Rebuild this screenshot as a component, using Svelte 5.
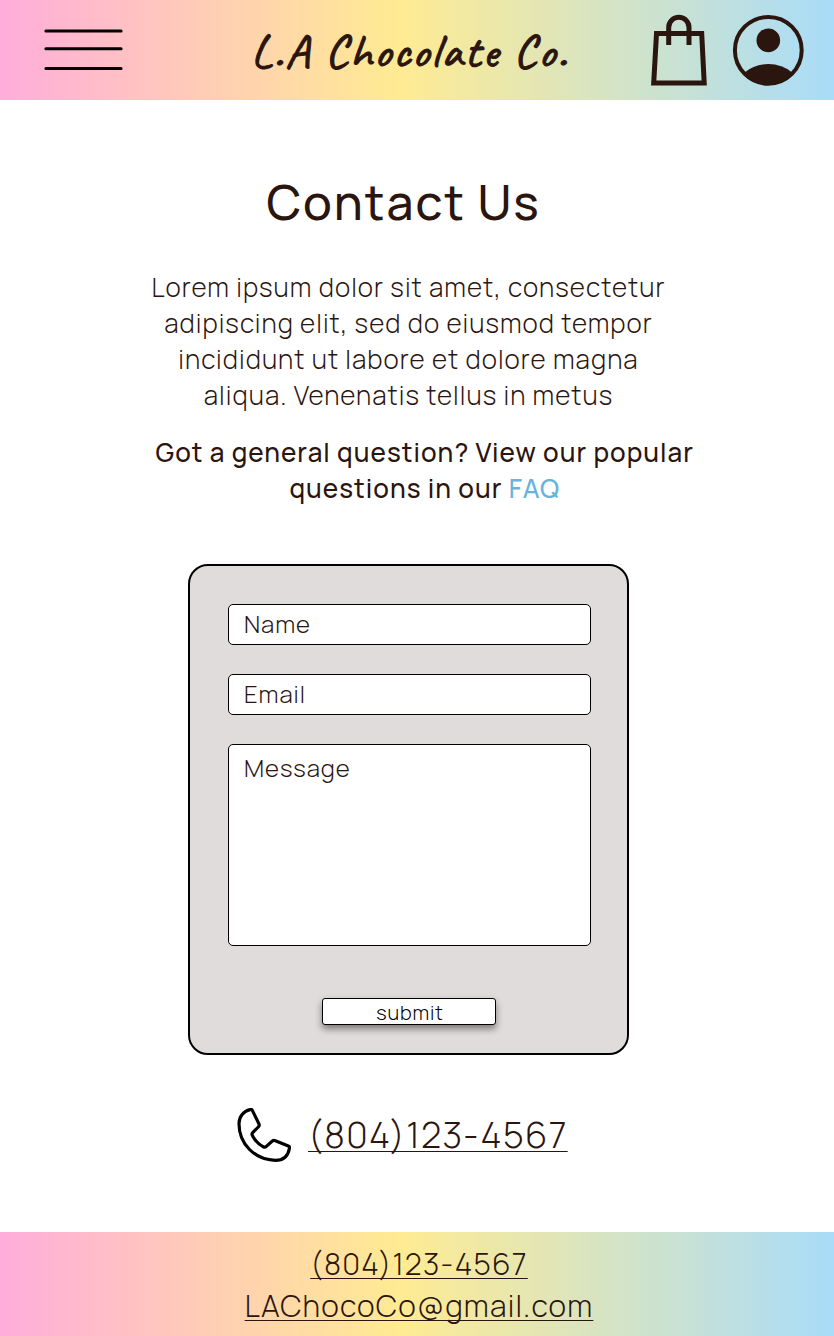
<script>
  let name = $state('');
  let email = $state('');
  let message = $state('');
</script>

<div class="page">
  <header>
    <button class="menu" aria-label="Menu">
      <svg width="80" height="42" viewBox="0 0 80 42" stroke="#000" stroke-width="3" stroke-linecap="round">
        <path d="M2.9 3H78.1M2.9 20.7H78.1M2.9 40.4H78.1" />
      </svg>
    </button>
    <div class="logo">L.A Chocolate Co.</div>
    <div class="actions">
      <svg width="58" height="74" viewBox="650 13 58 74" fill="none" stroke="#2a150f" stroke-width="5">
        <path d="M656.5 33.6H701.7L704.2 83.1H653.7Z" />
        <path d="M668.7 45V27.4A10.15 10.15 0 0 1 689 27.4V45" />
      </svg>
      <svg width="72" height="74" viewBox="732 13 72 74">
        <circle cx="768.3" cy="50.3" r="33.4" fill="none" stroke="#2a150f" stroke-width="4" />
        <circle cx="768.3" cy="40.4" r="11.8" fill="#2a150f" />
        <path d="M744.5 72.5Q754.5 64 768.3 64T792 72.5L791 76.5A35 35 0 0 1 745.5 76.5Z" fill="#2a150f" />
      </svg>
    </div>
  </header>

  <main>
    <h1>Contact Us</h1>
    <p class="intro">
      Lorem ipsum dolor sit amet, consectetur adipiscing elit, sed do eiusmod tempor incididunt ut
      labore et dolore magna aliqua. Venenatis tellus in metus
    </p>
    <p class="question">
      Got a general question? View our popular questions in our <a href="#faq">FAQ</a>
    </p>

    <form onsubmit={(e) => e.preventDefault()}>
      <input type="text" placeholder="Name" bind:value={name} />
      <input type="email" placeholder="Email" bind:value={email} />
      <textarea placeholder="Message" bind:value={message}></textarea>
      <button type="submit">submit</button>
    </form>

    <div class="call">
      <svg width="54" height="54" viewBox="22 22 162 162" fill="none" stroke="#000" stroke-width="9.5" stroke-linejoin="round">
        <path d="M68 29L88 70Q90 75 86 79L69 96Q65 101 69 106C76 120 88 132 102 139Q106 141 110 137L128 121Q132 118 137 120L176 136Q181 138 179 144C175 166 160 179 137 179C76 178 28 130 28 69C28 48 42 31 61 27Q66 25 68 29Z" />
      </svg>
      <a href="tel:8041234567">(804)123-4567</a>
    </div>
  </main>

  <footer>
    <a href="tel:8041234567">(804)123-4567</a>
    <a href="mailto:LAChocoCo@gmail.com">LAChocoCo@gmail.com</a>
  </footer>
</div>

<style>
  :global(body) {
    background: #fff;
  }

  .page {
    display: flex;
    flex-direction: column;
    width: 834px;
    height: 1336px;
    overflow: hidden;
    color: #2a150f;
    font-family: Manrope, Inter, sans-serif;
    font-weight: 300;
  }

  .logo,
  h1,
  p,
  a,
  input,
  textarea,
  form button {
    letter-spacing: 0.04em;
  }

  header,
  footer {
    box-sizing: border-box;
    background: linear-gradient(90deg, #ffaddb 0%, #ffeb92 48%, #a9dcf9 100%);
  }

  header {
    display: flex;
    height: 100px;
    padding-left: 43px;
  }

  .menu {
    display: flex;
    height: 42px;
    margin-top: 28px;
    padding: 0;
    border: 0;
    background: none;
  }

  .logo {
    margin: 21px 0 0 128px;
    width: 319px;
    font: 400 48px/60px Caveat, cursive;
    letter-spacing: 0.043em;
    white-space: nowrap;
    -webkit-text-stroke: 1.1px #2a150f;
  }

  .actions {
    display: flex;
    gap: 24px;
    margin: 13px 0 0 80px;
  }

  main {
    display: flex;
    flex: 1;
    flex-direction: column;
    align-items: flex-start;
  }

  h1 {
    margin: 69px 0 0 266.5px;
    font-size: 48px;
    font-weight: 500;
    line-height: 66px;
  }

  p {
    margin: 0;
    font-size: 26px;
    line-height: 36px;
    text-align: center;
  }

  .intro {
    width: 520px;
    margin: 34px 0 0 148.5px;
  }

  .question {
    width: 544px;
    margin: 21px 0 0 152.8px;
    font-weight: 500;
  }

  .question a {
    color: #67b3dc;
    text-decoration: none;
  }

  form {
    display: flex;
    flex-direction: column;
    box-sizing: border-box;
    width: 441px;
    height: 491px;
    margin: 58px 0 0 188px;
    padding: 38px 36px 0 38px;
    border: 2px solid #000;
    border-radius: 20px;
    background: #e0dcdb;
  }

  input,
  textarea {
    box-sizing: border-box;
    width: 363px;
    height: 41px;
    margin: 0 0 29px;
    padding: 0 15px 2px;
    border: 1px solid #000;
    border-radius: 5px;
    background: #fff;
    color: inherit;
    font: 300 24px/33px Manrope, Inter, sans-serif;
    outline: none;
    resize: none;
  }

  textarea {
    height: 202px;
    margin-bottom: 52px;
    padding-top: 6px;
  }

  ::placeholder {
    color: #2a150f;
    opacity: 1;
  }

  form button {
    box-sizing: border-box;
    width: 174px;
    height: 27px;
    margin-left: 94px;
    padding: 0 0 0 2px;
    border: 1px solid #000;
    border-radius: 3px;
    background: #fff;
    box-shadow: 0 4px 7px rgba(0, 0, 0, 0.45);
    color: #000;
    font: 300 20px/27px Manrope, Inter, sans-serif;
  }

  a {
    color: inherit;
    text-decoration-skip-ink: none;
    text-decoration-thickness: 1px;
  }

  .call {
    display: flex;
    gap: 17px;
    margin: 53px 0 0 237px;
    font-size: 36px;
    line-height: 49px;
  }

  .call a {
    margin-top: 2px;
    letter-spacing: 0.037em;
    text-underline-offset: 3px;
  }

  footer {
    display: flex;
    flex-direction: column;
    align-items: center;
    height: 104px;
    padding: 11px 0 0 4px;
    font-size: 30px;
    line-height: 42px;
  }

  footer a {
    text-underline-offset: 3px;
  }
</style>
